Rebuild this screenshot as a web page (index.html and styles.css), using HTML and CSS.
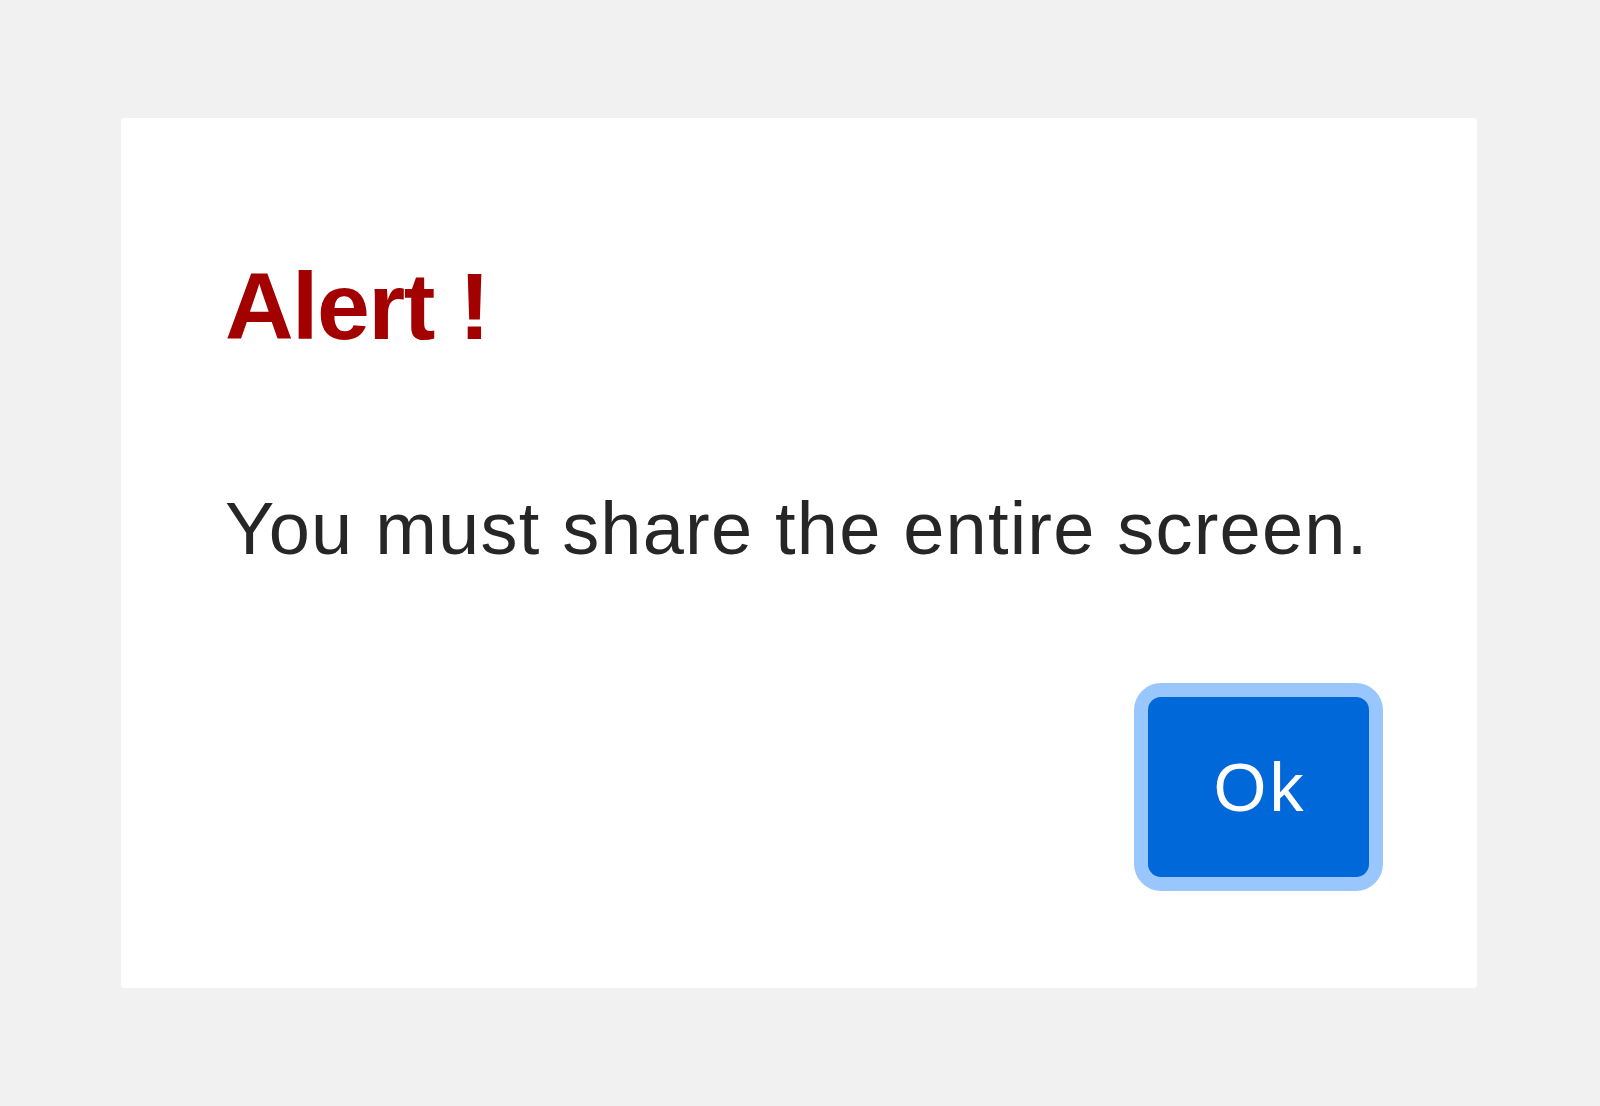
FILE: index.html
```html
<!DOCTYPE html>
<html>
<head>
<meta charset="utf-8">
<link rel="stylesheet" href="styles.css">
</head>
<body>
<div class="dialog">
  <h1 class="title">Alert !</h1>
  <p class="message">You must share the entire screen.</p>
  <div class="actions">
    <button class="ok">Ok</button>
  </div>
</div>
</body>
</html>
```
FILE: styles.css
```css
html, body {
  margin: 0;
  padding: 0;
}
body {
  background: #f1f1f1;
  width: 1600px;
  height: 1106px;
  font-family: "Liberation Sans", Arial, sans-serif;
}
.dialog {
  box-sizing: border-box;
  margin: 118px 0 0 121px;
  width: 1356px;
  height: 870px;
  background: #ffffff;
  border-radius: 3px;
  padding: 138px 108px 0 104px;
  display: flex;
  flex-direction: column;
}
.title {
  margin: 0;
  font-size: 95px;
  line-height: 100px;
  font-weight: bold;
  letter-spacing: -1.5px;
  color: #a30000;
}
.message {
  margin: 136px 0 0 0;
  font-size: 74px;
  line-height: 74px;
  letter-spacing: 1.2px;
  color: #262626;
}
.actions {
  margin-top: 131px;
  display: flex;
  justify-content: flex-end;
}
.ok {
  width: 221px;
  height: 180px;
  border: none;
  border-radius: 13px;
  background: #0068d8;
  color: #ffffff;
  font-family: "Liberation Sans", Arial, sans-serif;
  font-size: 68px;
  letter-spacing: 3px;
  padding: 0 0 0 3px;
  box-shadow: 0 0 0 14px #99c7fd;
}
```
